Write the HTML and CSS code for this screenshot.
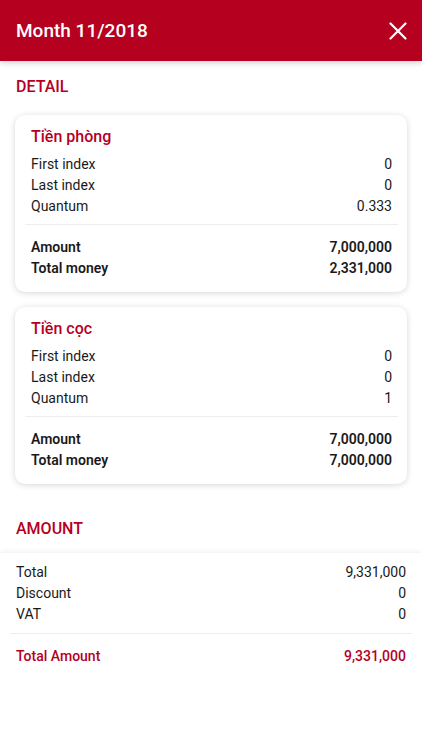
FILE: index.html
```html
<!DOCTYPE html>
<html lang="vi">
<head>
    <meta charset="UTF-8">
    <meta name="viewport" content="width=device-width, initial-scale=1.0">
    <title>Month 11/2018</title>
    <link rel="stylesheet" href="styles.css">
</head>
<body>

<div class="header">
    <h1>Month 11/2018</h1>
    <button class="close" aria-label="Close">
        <svg width="18" height="18" viewBox="0 0 18 18">
            <path d="M1.5 1.5 L16.5 16.5 M16.5 1.5 L1.5 16.5" stroke="#fff" stroke-width="2.2" stroke-linecap="round"/>
        </svg>
    </button>
</div>

<h2 class="section">DETAIL</h2>

<div class="cards">
    <div class="card">
        <h3>Tiền phòng</h3>
        <div class="row"><span>First index</span><span>0</span></div>
        <div class="row"><span>Last index</span><span>0</span></div>
        <div class="row"><span>Quantum</span><span>0.333</span></div>
        <hr>
        <div class="row bold"><span>Amount</span><span>7,000,000</span></div>
        <div class="row bold"><span>Total money</span><span>2,331,000</span></div>
    </div>

    <div class="card">
        <h3>Tiền cọc</h3>
        <div class="row"><span>First index</span><span>0</span></div>
        <div class="row"><span>Last index</span><span>0</span></div>
        <div class="row"><span>Quantum</span><span>1</span></div>
        <hr>
        <div class="row bold"><span>Amount</span><span>7,000,000</span></div>
        <div class="row bold"><span>Total money</span><span>7,000,000</span></div>
    </div>
</div>

<h2 class="section amount-title">AMOUNT</h2>

<div class="summary">
    <div class="row"><span>Total</span><span>9,331,000</span></div>
    <div class="row"><span>Discount</span><span>0</span></div>
    <div class="row"><span>VAT</span><span>0</span></div>
    <hr>
    <div class="row total"><span>Total Amount</span><span>9,331,000</span></div>
</div>

</body>
</html>
```

FILE: styles.css
```css
body {
    margin: 0;
    font-family: Roboto, "Noto Sans", sans-serif;
    background: #fff;
    color: #1a1a1a;
}
.header {
    height: 61px;
    background: #b5001f;
    display: flex;
    align-items: center;
    justify-content: space-between;
    padding: 0 15px 0 16px;
    box-shadow: 0 2px 6px rgba(0,0,0,0.18);
}
.header h1 {
    margin: 0;
    color: #fff;
    font-size: 19px;
    font-weight: 500;
}
.close {
    background: none;
    border: none;
    padding: 0;
    width: 18px;
    height: 18px;
    cursor: pointer;
}
.section {
    margin: 0;
    padding: 17px 16px 0;
    height: 37px;
    line-height: 18px;
    font-size: 16px;
    font-weight: 500;
    color: #b5001f;
}
.cards {
    padding: 0 15px;
    display: flex;
    flex-direction: column;
    gap: 15px;
}
.card {
    background: #fff;
    border-radius: 10px;
    box-shadow: 0 1px 6px rgba(0,0,0,0.16);
    padding: 11px 15px 13px 16px;
}
.card h3 {
    margin: 0 0 6px;
    font-size: 16px;
    font-weight: 500;
    color: #b5001f;
    line-height: 22px;
}
.row {
    display: flex;
    justify-content: space-between;
    font-size: 14px;
    line-height: 21px;
}
.bold {
    font-weight: 600;
}
hr {
    border: none;
    border-top: 1px solid #eee;
    margin: 7px -6px 12px -6px;
}
.amount-title {
    margin-top: 19px;
    height: 33px;
}
.summary {
    background: #fff;
    box-shadow: 0 2px 7px rgba(0,0,0,0.18);
    padding: 9px 16px 14px;
}
.summary hr {
    margin: 8px -6px 12px;
}
.total {
    color: #b5001f;
    font-weight: 500;
}
```
